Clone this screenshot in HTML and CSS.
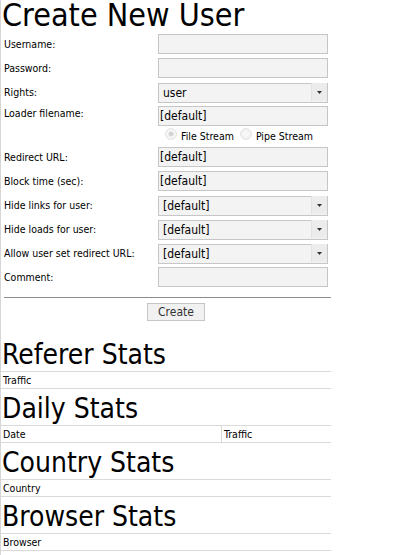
FILE: index.html
```html
<!DOCTYPE html>
<html>
<head>
<meta charset="utf-8">
<title>Create New User</title>
<link rel="stylesheet" href="styles.css">
</head>
<body>
<div class="page">
  <h1 class="title">Create New User</h1>
  <form class="user-form">
    <div class="row"><label class="lbl">Username:</label><input class="field" type="text"></div>
    <div class="row"><label class="lbl">Password:</label><input class="field" type="password"></div>
    <div class="row"><label class="lbl">Rights:</label>
      <div class="select-wrap"><select class="field select"><option>user</option></select><span class="arrow"><svg width="5" height="3" viewBox="0 0 5 3"><path d="M0 0H5L2.5 3Z" fill="#333"/></svg></span></div>
    </div>
    <div class="row row-loader"><label class="lbl lbl-top">Loader filename:</label>
      <div class="cell">
        <input class="field" type="text" value="[default]">
        <div class="radios">
          <label class="radio"><input type="radio" name="st" checked disabled>File Stream</label>
          <label class="radio"><input type="radio" name="st" disabled>Pipe Stream</label>
        </div>
      </div>
    </div>
    <div class="row"><label class="lbl">Redirect URL:</label><input class="field" type="text" value="[default]"></div>
    <div class="row"><label class="lbl">Block time (sec):</label><input class="field" type="text" value="[default]"></div>
    <div class="row"><label class="lbl">Hide links for user:</label>
      <div class="select-wrap"><select class="field select"><option>[default]</option></select><span class="arrow"><svg width="5" height="3" viewBox="0 0 5 3"><path d="M0 0H5L2.5 3Z" fill="#333"/></svg></span></div>
    </div>
    <div class="row"><label class="lbl">Hide loads for user:</label>
      <div class="select-wrap"><select class="field select"><option>[default]</option></select><span class="arrow"><svg width="5" height="3" viewBox="0 0 5 3"><path d="M0 0H5L2.5 3Z" fill="#333"/></svg></span></div>
    </div>
    <div class="row"><label class="lbl">Allow user set redirect URL:</label>
      <div class="select-wrap"><select class="field select"><option>[default]</option></select><span class="arrow"><svg width="5" height="3" viewBox="0 0 5 3"><path d="M0 0H5L2.5 3Z" fill="#333"/></svg></span></div>
    </div>
    <div class="row"><label class="lbl">Comment:</label><input class="field" type="text"></div>
    <hr class="sep">
    <div class="actions"><button type="button" class="btn">Create</button></div>
  </form>

  <h2 class="sub">Referer Stats</h2>
  <table class="stats"><tr><td>Traffic</td></tr></table>

  <h2 class="sub">Daily Stats</h2>
  <table class="stats"><tr><td class="col-date">Date</td><td class="col-split">Traffic</td></tr></table>

  <h2 class="sub">Country Stats</h2>
  <table class="stats"><tr><td>Country</td></tr></table>

  <h2 class="sub">Browser Stats</h2>
  <table class="stats"><tr><td>Browser</td></tr></table>
</div>
</body>
</html>
```
FILE: styles.css
```css
html, body {
  margin: 0;
  padding: 0;
  background: #fff;
}
body {
  font-family: "DejaVu Sans Condensed", "DejaVu Sans", sans-serif;
  font-stretch: condensed;
  color: #000;
}
.page {
  width: 330px;
  border-left: 1px solid #d6d6d6;
  min-height: 555px;
}
.title {
  margin: 0 0 2px 0;
  font-size: 32px;
  font-weight: normal;
  line-height: 30px;
  padding-left: 1px;
}
.user-form {
  margin: 0;
}
.row {
  display: grid;
  grid-template-columns: 157px 170px;
  align-items: center;
  padding: 2px 0;
  min-height: 20px;
}
.lbl {
  font-size: 10.5px;
  line-height: 13px;
  padding-left: 3px;
}
.lbl-top {
  align-self: start;
  padding-top: 1px;
}
.field {
  box-sizing: border-box;
  width: 170px;
  height: 20px;
  margin: 0;
  border: 1px solid #c6c6c6;
  background: #f3f3f3;
  font-family: "DejaVu Sans Condensed", "DejaVu Sans", sans-serif;
  font-stretch: condensed;
  font-size: 12px;
  color: #000;
  padding: 0 0 0 1px;
  outline: none;
  border-radius: 0;
}
.select-wrap {
  position: relative;
  width: 170px;
  height: 20px;
}
.select {
  appearance: none;
  -webkit-appearance: none;
  padding-left: 4px;
}
.arrow {
  position: absolute;
  top: 1px;
  right: 1px;
  width: 15px;
  height: 18px;
  background: #ececec;
  border-left: 1px solid #e2e2e2;
  display: flex;
  align-items: center;
  justify-content: center;
  pointer-events: none;
}
.arrow svg {
  display: block;
}
.cell {
  display: flex;
  flex-direction: column;
}
.radios {
  display: flex;
  gap: 6px;
  padding: 4px 0 0 7px;
  height: 13px;
  font-size: 10.5px;
  line-height: 13px;
}
.radio {
  display: inline-flex;
  align-items: flex-end;
  white-space: nowrap;
}
.radio input {
  appearance: none;
  -webkit-appearance: none;
  width: 12px;
  height: 12px;
  margin: 0 4px 3px 0;
  border-radius: 50%;
  border: 1px solid #e4e4e4;
  background: radial-gradient(circle at 50% 50%, #fbfbfb 0, #f0f0f0 70%);
  box-sizing: border-box;
  flex: none;
}
.radio input:checked {
  background: radial-gradient(circle at 50% 50%, #cfcfcf 0, #d6d6d6 2px, #f7f7f7 3px, #efefef 100%);
}
.sep {
  margin: 8px 0 5px 3px;
  border: 0;
  border-top: 1px solid #8c8c8c;
  height: 0;
  width: 327px;
}
.actions {
  display: flex;
  padding-left: 146px;
}
.btn {
  box-sizing: border-box;
  width: 58px;
  height: 18px;
  margin: 0;
  padding: 0;
  border: 1px solid #c6c6c6;
  background: #f1f1f1;
  font-family: "DejaVu Sans Condensed", "DejaVu Sans", sans-serif;
  font-stretch: condensed;
  font-size: 12px;
  line-height: 16px;
  color: #333;
  border-radius: 0;
}
.sub {
  margin: 0;
  padding: 4px 0 0 1px;
  font-size: 28px;
  font-weight: normal;
  line-height: 32px;
}
.user-form + .sub {
  margin-top: 14px;
}
.stats {
  width: 330px;
  border-collapse: collapse;
}
.stats td {
  border-top: 1px solid #dadada;
  border-bottom: 1px solid #dadada;
  height: 16px;
  padding: 0 0 0 2px;
  font-size: 10.5px;
  line-height: 16px;
}
.stats .col-date {
  width: 218px;
}
.stats .col-split {
  border-left: 1px solid #dadada;
}
```
